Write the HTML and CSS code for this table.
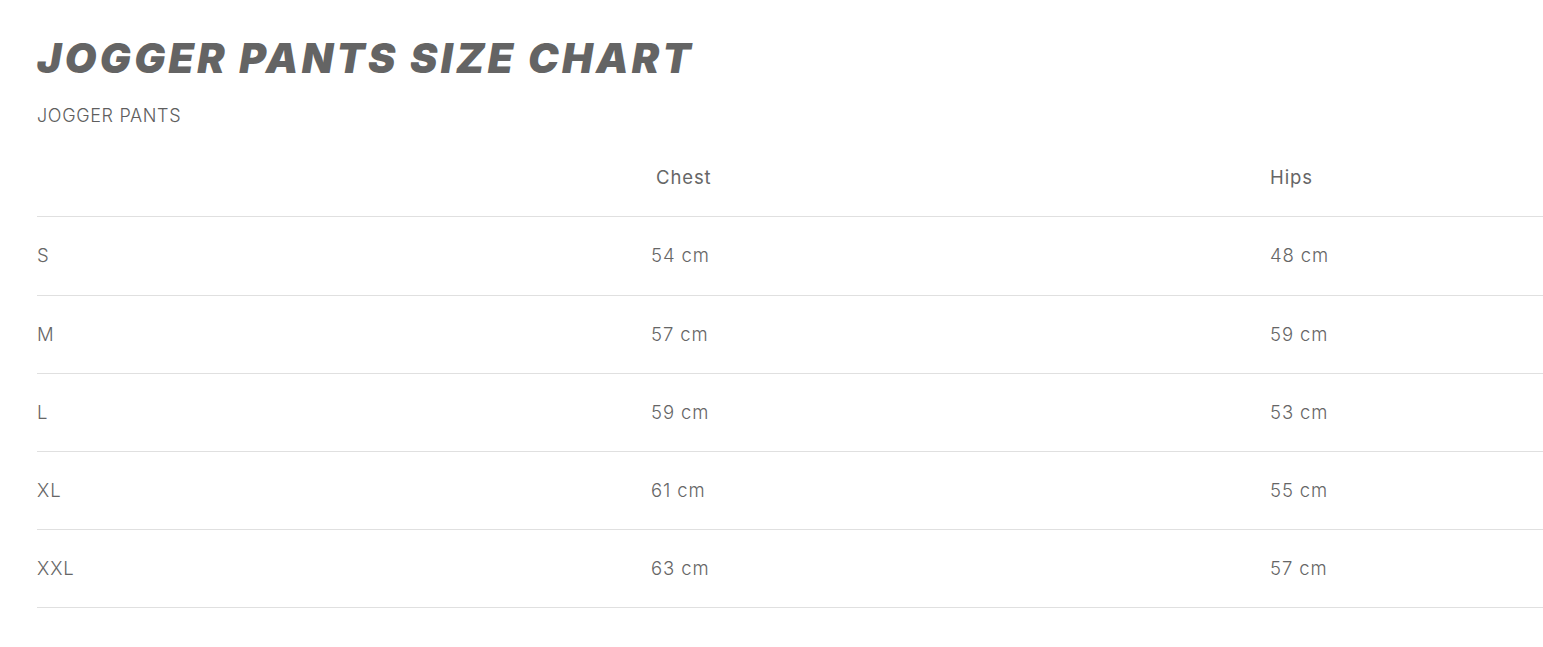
FILE: index.html
```html
<!DOCTYPE html>
<html lang="en">
<head>
<meta charset="utf-8">
<title>Jogger Pants Size Chart</title>
<link rel="stylesheet" href="styles.css">
</head>
<body>
<main class="page">
  <h1 class="title">JOGGER PANTS SIZE CHART</h1>
  <p class="subtitle">JOGGER PANTS</p>
  <table class="chart">
    <thead>
      <tr>
        <th class="col-size"></th>
        <th class="col-chest"><span class="head-chest">Chest</span></th>
        <th class="col-hips">Hips</th>
      </tr>
    </thead>
    <tbody>
      <tr class="first-row"><td>S</td><td>54 cm</td><td>48 cm</td></tr>
      <tr><td>M</td><td>57 cm</td><td>59 cm</td></tr>
      <tr><td>L</td><td>59 cm</td><td>53 cm</td></tr>
      <tr><td>XL</td><td>61 cm</td><td>55 cm</td></tr>
      <tr><td>XXL</td><td>63 cm</td><td>57 cm</td></tr>
    </tbody>
  </table>
</main>
</body>
</html>
```
FILE: styles.css
```css
html, body {
  margin: 0;
  padding: 0;
  background: #ffffff;
}

.page {
  padding: 30px 0 0 37px;
  font-family: "Inter", "Open Sans", "Liberation Sans", sans-serif;
  color: #666666;
}

.title {
  margin: 0;
  font-family: "Inter", "Liberation Sans", sans-serif;
  font-weight: 900;
  font-style: italic;
  font-size: 41px;
  line-height: 56px;
  letter-spacing: 3.3px;
  color: #646464;
}

.subtitle {
  margin: 17px 0 0 0;
  font-size: 18px;
  font-weight: 300;
  line-height: 26px;
  letter-spacing: 0.65px;
  color: #5e5e5e;
}

.chart {
  width: 100%;
  border-collapse: collapse;
  margin-top: 10px;
  font-size: 18.5px;
  font-weight: 300;
  letter-spacing: 0.9px;
}

.chart th,
.chart td {
  text-align: left;
  padding: 0 0 2px 0;
  height: 75px;
  border-bottom: 1px solid #e0e0e0;
  vertical-align: middle;
  line-height: 26px;
}

.chart th {
  font-weight: 400;
  color: #666666;
}

.chart .first-row td {
  height: 76px;
}

.col-size { width: 614px; }
.col-chest { width: 619px; }

.head-chest {
  padding-left: 5px;
}
```
